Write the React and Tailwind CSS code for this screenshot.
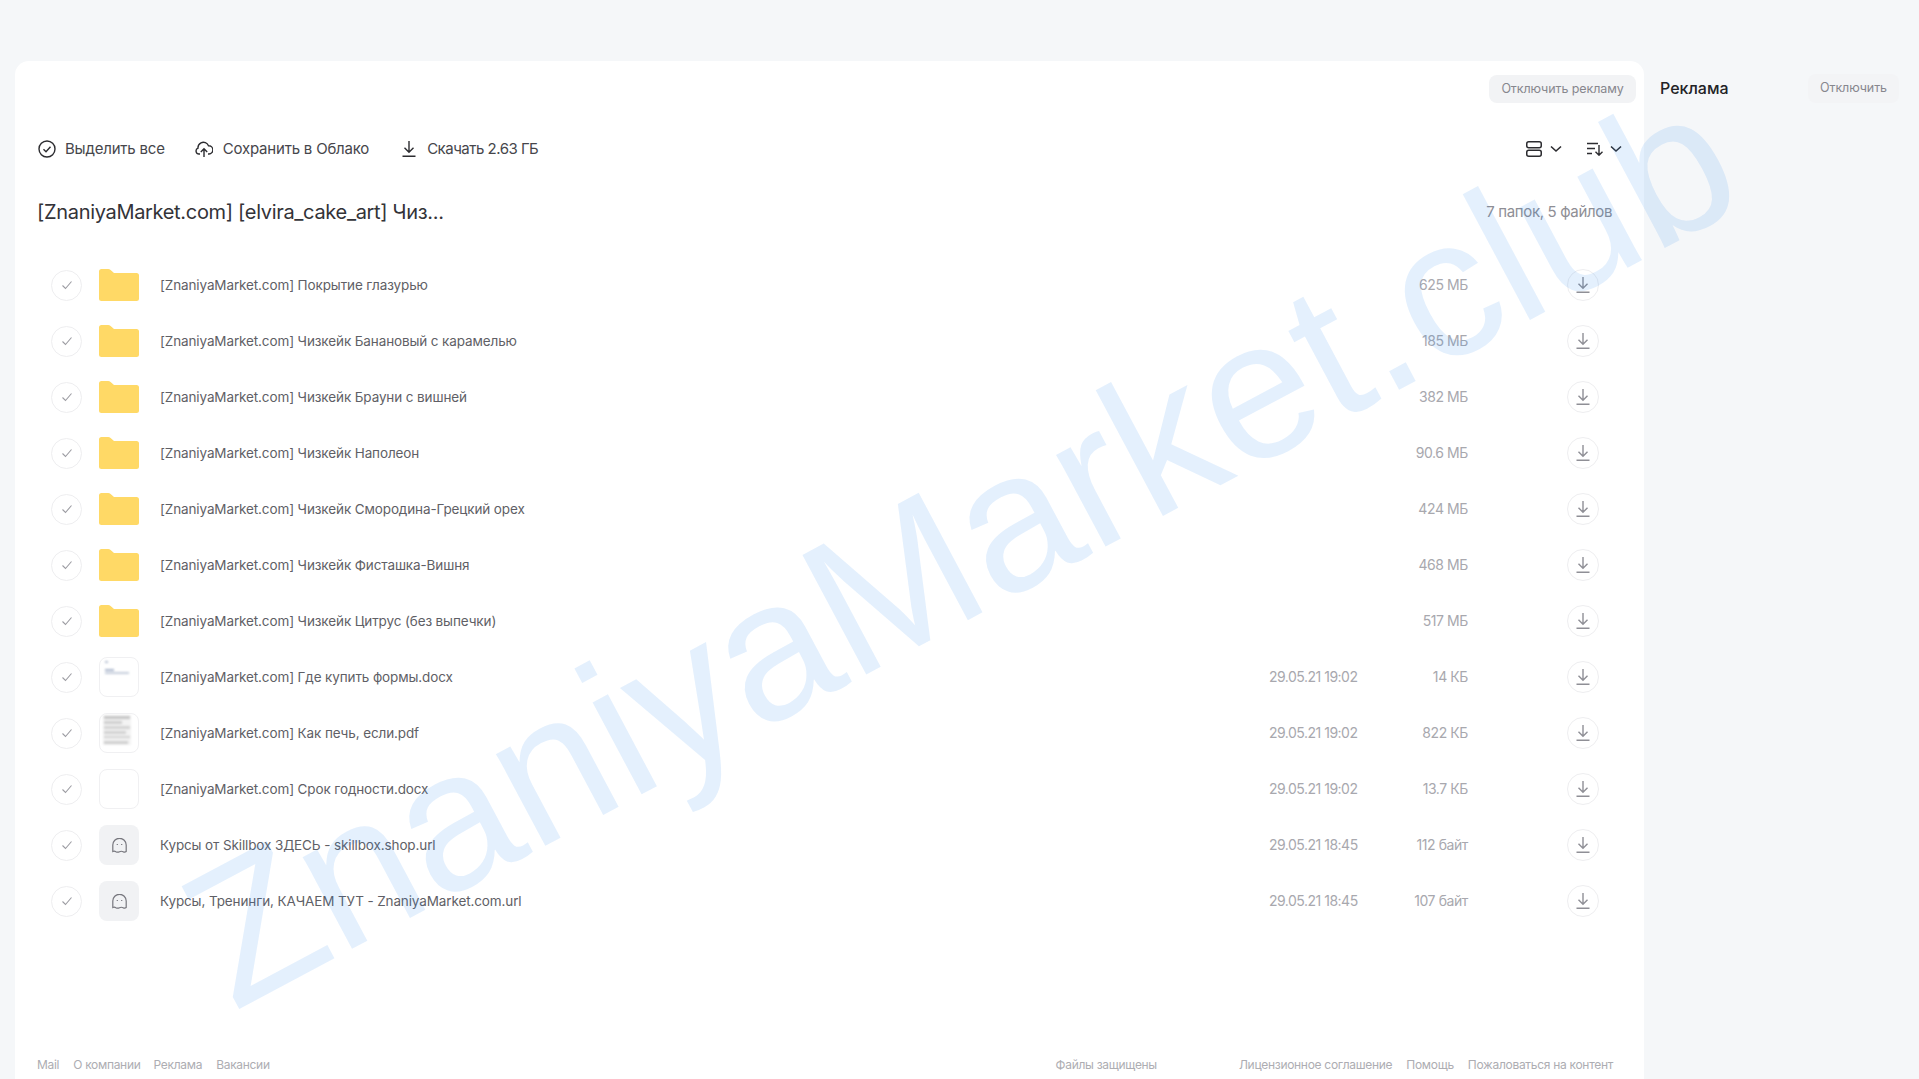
import React from "react";

const rows = [
  { n: "[ZnaniyaMarket.com] Покрытие глазурью", s: "625 МБ", t: "folder" },
  { n: "[ZnaniyaMarket.com] Чизкейк Банановый с карамелью", s: "185 МБ", t: "folder" },
  { n: "[ZnaniyaMarket.com] Чизкейк Брауни с вишней", s: "382 МБ", t: "folder" },
  { n: "[ZnaniyaMarket.com] Чизкейк Наполеон", s: "90.6 МБ", t: "folder" },
  { n: "[ZnaniyaMarket.com] Чизкейк Смородина-Грецкий орех", s: "424 МБ", t: "folder" },
  { n: "[ZnaniyaMarket.com] Чизкейк Фисташка-Вишня", s: "468 МБ", t: "folder" },
  { n: "[ZnaniyaMarket.com] Чизкейк Цитрус (без выпечки)", s: "517 МБ", t: "folder" },
  { n: "[ZnaniyaMarket.com] Где купить формы.docx", d: "29.05.21 19:02", s: "14 КБ", t: "doc1" },
  { n: "[ZnaniyaMarket.com] Как печь, если.pdf", d: "29.05.21 19:02", s: "822 КБ", t: "doc2" },
  { n: "[ZnaniyaMarket.com] Срок годности.docx", d: "29.05.21 19:02", s: "13.7 КБ", t: "blank" },
  { n: "Курсы от Skillbox ЗДЕСЬ - skillbox.shop.url", d: "29.05.21 18:45", s: "112 байт", t: "ghost" },
  { n: "Курсы, Тренинги, КАЧАЕМ ТУТ - ZnaniyaMarket.com.url", d: "29.05.21 18:45", s: "107 байт", t: "ghost" },
];

const Download = ({ c = "#8f8f96", w = 1.4 }) => (
  <svg width="16" height="18" viewBox="0 0 16 18" fill="none" stroke={c} strokeWidth={w}>
    <path d="M8 1v11M3.500 7.800 8 12.300l4.500-4.500M1.500 16.200h13" />
  </svg>
);

const Folder = () => (
  <svg width="40" height="32" viewBox="0 0 40 32">
    <path d="M0 2.500A2.500 2.500 0 0 1 2.500 0h6.600c1 0 1.800.3 2.500 1l3.400 3h22.500A2.500 2.500 0 0 1 40 6.500v23a2.500 2.500 0 0 1-2.500 2.500h-35A2.500 2.500 0 0 1 0 29.500z" fill="#ffd966" />
  </svg>
);

const Thumb = ({ t }) => {
  if (t === "folder") return <Folder />;
  if (t === "ghost")
    return (
      <div className="w-10 h-10 rounded-lg bg-[#f1f2f4] flex items-center justify-center">
        <svg width="15" height="15" viewBox="0 0 15 15" fill="none" stroke="#77777e" strokeWidth="1.200">
          <path d="M.8 13.500V7a6.700 6.700 0 0 1 13.400 0v6.500c-1 .8-2 .8-3.100.2-1.200-.6-2.400-.6-3.600 0-1.200.6-2.400.6-3.600 0-1.100-.6-2.100-.6-3.100-.2z" />
          <path d="M5.300 6v.9M9.700 6v.9" />
        </svg>
      </div>
    );
  return (
    <div className="w-10 h-10 rounded-lg border border-[#f0f0f2] bg-white overflow-hidden">
      {t === "doc1" && (
        <svg width="38" height="38" viewBox="0 0 38 38" className="blur-[1px]">
          <rect x="5" y="3" width="3" height="2" fill="#b9c3d4" />
          <rect x="5" y="11" width="9" height="2" fill="#aab6cc" />
          <rect x="5" y="14" width="24" height="2" fill="#c5cddb" />
        </svg>
      )}
      {t === "doc2" && (
        <svg width="38" height="38" viewBox="0 0 38 38" className="blur-[1px]">
          <rect x="3" y="1" width="28" height="30" fill="#f3f3f3" />
          <rect x="4" y="2" width="26" height="3" fill="#c6c6c6" />
          <rect x="4" y="7" width="18" height="3" fill="#cfcfcf" />
          <rect x="4" y="12" width="26" height="3" fill="#d4d4d4" />
          <rect x="4" y="17" width="22" height="3" fill="#d2d2d2" />
          <rect x="4" y="22" width="26" height="2" fill="#d2d2d2" />
          <rect x="4" y="27" width="24" height="3" fill="#d0d0d0" />
        </svg>
      )}
    </div>
  );
};

const Row = ({ r }) => (
  <div className="h-14 flex items-center pl-9 pr-[45px]">
    <div className="w-[31px] h-[31px] rounded-full border border-[#eeeef0] flex items-center justify-center shrink-0">
      <svg width="12" height="10" viewBox="0 0 12 10" fill="none" stroke="#9c9ca2" strokeWidth="1.100">
        <path d="M1.500 5.500 4.500 8.500 10.500 1.500" />
      </svg>
    </div>
    <div className="w-10 h-10 ml-[17px] flex items-center justify-center shrink-0">
      <Thumb t={r.t} />
    </div>
    <div className="ml-[21px] flex-1 text-[13.5px] tracking-[-0.12px] text-[#5f5f66] whitespace-nowrap">{r.n}</div>
    <div className="w-[88px] pb-px text-[14px] tracking-[-0.5px] text-[#a8a8ae] whitespace-nowrap">{r.d}</div>
    <div className="w-[111px] pb-px text-right text-[14px] tracking-[-0.4px] text-[#a8a8ae] whitespace-nowrap">{r.s}</div>
    <div className="ml-[99px] w-8 h-8 rounded-full border border-[#eeeef0] flex items-center justify-center shrink-0">
      <Download />
    </div>
  </div>
);

const Chevron = () => (
  <svg width="12" height="8" viewBox="0 0 12 8" fill="none" stroke="#2c2c30" strokeWidth="1.600">
    <path d="M1 1.500 6 6l5-4.500" />
  </svg>
);

export default function App() {
  return (
    <div className="relative h-[1079px] overflow-hidden bg-[#f5f7f9] flex pt-[61px] pl-[15px] font-['Inter',sans-serif]">
      <main className="w-[1629px] bg-white rounded-t-[14px] flex flex-col shrink-0">
        <div className="flex justify-end pt-[14px] pr-2">
          <button className="h-7 w-[147px] rounded-lg bg-[#f2f3f5] text-[12.5px] tracking-[-0.1px] text-[#87878e]">Отключить рекламу</button>
        </div>
        <div className="mt-[34px] h-6 flex items-center pl-[23px] pr-[22px] text-[15px] tracking-[-0.2px] text-[#46464b]">
          <svg width="18" height="18" viewBox="0 0 18 18" fill="none" stroke="#2c2c30" strokeWidth="1.400">
            <circle cx="9" cy="9" r="8" />
            <path d="M5.500 9.200 8 11.700l4.500-5" />
          </svg>
          <span className="ml-[9px]">Выделить все</span>
          <svg className="ml-[30px]" width="18" height="18" viewBox="0 0 18 18" fill="none" stroke="#2c2c30" strokeWidth="1.400">
            <path d="M5 14H4a3 3 0 0 1-1-5.800 5.500 5.500 0 0 1 3-5.400 5.500 5.500 0 0 1 7.500 3A3.800 3.800 0 0 1 14 14h-1" />
            <path d="M9 17V9M5.800 12 9 8.800l3.200 3.200" />
          </svg>
          <span className="ml-[10px]">Сохранить в Облако</span>
          <span className="ml-8"><Download c="#2c2c30" /></span>
          <span className="ml-[10px] tracking-[-0.5px]">Скачать 2.63 ГБ</span>
          <div className="ml-auto flex items-center">
            <svg width="16" height="16" viewBox="0 0 16 16" fill="none" stroke="#2c2c30" strokeWidth="1.500">
              <rect x="0.750" y="0.750" width="14.500" height="6" rx="2" />
              <rect x="0.750" y="9.250" width="14.500" height="6" rx="2" />
            </svg>
            <span className="ml-2"><Chevron /></span>
            <svg className="ml-[25px]" width="16" height="14" viewBox="0 0 16 14" fill="none" stroke="#2c2c30" strokeWidth="1.400">
              <path d="M0 1.500h11M0 6.500h8M0 11.500h5M12 3v10M8.500 9.800 12 13.200l3.500-3.400" />
            </svg>
            <span className="ml-[7px]"><Chevron /></span>
          </div>
        </div>
        <div className="mt-[37px] h-7 flex items-center justify-between pl-[22px] pr-8">
          <h1 className="text-[20px] tracking-[-0.32px] font-normal text-[#333338]">[ZnaniyaMarket.com] [elvira_cake_art] Чиз...</h1>
          <span className="text-[15px] tracking-[-0.35px] text-[#8e8e95]">7 папок, 5 файлов</span>
        </div>
        <div className="mt-[31px]">
          {rows.map((r) => <Row key={r.n} r={r} />)}
        </div>
        <footer className="mt-auto pb-[6px] pl-[22px] pr-[31px] flex text-[12px] leading-4 tracking-[-0.3px] text-[#adadb2]">
          <span>Mail</span>
          <span className="ml-[14px]">О компании</span>
          <span className="ml-[13px]">Реклама</span>
          <span className="ml-[14px]">Вакансии</span>
          <span className="ml-auto">Файлы защищены</span>
          <span className="ml-[82px]">Лицензионное соглашение</span>
          <span className="ml-[14px]">Помощь</span>
          <span className="ml-[14px]">Пожаловаться на контент</span>
        </footer>
      </main>
      <aside className="flex-1 pl-4 pr-5 pt-[13px]">
        <div className="flex items-center justify-between h-[29px]">
          <span className="pb-[2px] text-[16px] font-medium text-[#222226]">Реклама</span>
          <button className="w-[91px] h-[29px] rounded-lg bg-[#f3f4f6] text-[12.5px] tracking-[-0.1px] text-[#87878e]">Отключить</button>
        </div>
      </aside>
      <div className="absolute left-[202px] top-[854px] pointer-events-none whitespace-nowrap origin-left -rotate-[28.1deg] font-['Liberation_Sans',sans-serif] text-[197px] leading-none text-[rgba(30,130,240,0.12)]">
        ZnaniyaMarket.club
      </div>
    </div>
  );
}
